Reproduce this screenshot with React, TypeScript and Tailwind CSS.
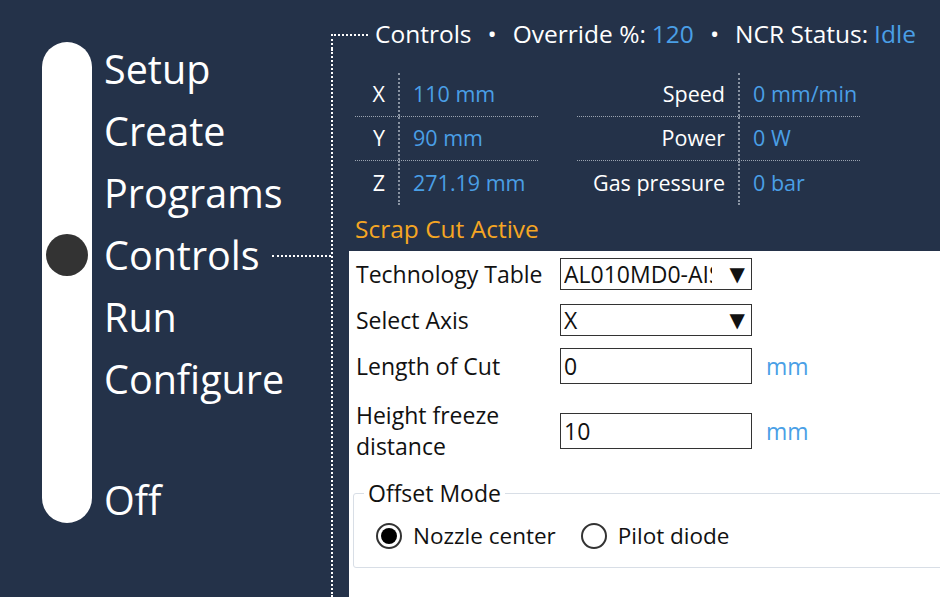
const navItems = ['Setup', 'Create', 'Programs', 'Controls', 'Run', 'Configure']

const axes = [
  { label: 'X', value: '110 mm' },
  { label: 'Y', value: '90 mm' },
  { label: 'Z', value: '271.19 mm' },
]

const stats = [
  { label: 'Speed', value: '0 mm/min' },
  { label: 'Power', value: '0 W' },
  { label: 'Gas pressure', value: '0 bar' },
]

function ReadoutTable({ rows, labelWidth, width }: { rows: { label: string; value: string }[]; labelWidth: string; width: string }) {
  return (
    <div className={`flex flex-col ${width}`}>
      {rows.map((row, i) => (
        <div
          key={row.label}
          className={`flex h-[44px] items-center ${i < rows.length - 1 ? 'border-b border-dotted border-[#9aa3b0]' : ''}`}
        >
          <div className={`${labelWidth} flex h-full items-center justify-end border-r-2 border-dotted border-[#8a94a3] pr-[13px] text-white`}>
            {row.label}
          </div>
          <div className="pl-[13px] text-[#4a9fe6]">{row.value}</div>
        </div>
      ))}
    </div>
  )
}

function SelectBox({ value }: { value: string }) {
  return (
    <div className="flex h-[32px] w-[192px] items-center border border-[#333] bg-white pl-[3px] pr-[6px]">
      <span className="w-[148px] overflow-hidden whitespace-nowrap">{value}</span>
      <span className="ml-auto text-[20px] leading-none" style={{ fontFamily: '"DejaVu Sans", sans-serif' }}>
        ▼
      </span>
    </div>
  )
}

function TextBox({ value }: { value: string }) {
  return (
    <div className="flex h-[36px] w-[192px] items-center border border-[#333] bg-white pl-[3px]">
      {value}
    </div>
  )
}

function Radio({ checked, label }: { checked?: boolean; label: string }) {
  return (
    <div className="flex items-center gap-[11px]">
      <span className="flex h-[26px] w-[26px] items-center justify-center rounded-full border-2 border-[#333] bg-white">
        {checked && <span className="h-[16px] w-[16px] rounded-full bg-black" />}
      </span>
      <span>{label}</span>
    </div>
  )
}

export default function App() {
  return (
    <div
      className="flex h-[597px] w-[940px] overflow-hidden bg-[#243249]"
      style={{ fontFamily: '"Open Sans", "Noto Sans", sans-serif' }}
    >
      {/* side nav */}
      <div className="flex w-[331px] shrink-0 pt-[42px]">
        <div className="relative ml-[42px] h-[481px] w-[50px] shrink-0 rounded-full bg-white">
          <span className="absolute left-[4px] top-[192px] h-[42px] w-[42px] rounded-full bg-[#333333]" />
        </div>
        <div className="-mt-[4px] ml-[12px] flex flex-1 flex-col text-[39.5px] leading-[62px] text-white">
          {navItems.map((item) => (
            <div key={item} className="flex h-[62px] items-center">
              <span>{item}</span>
              {item === 'Controls' && <span className="ml-[12px] mt-[2px] flex-1 border-t-2 border-dotted border-white" />}
            </div>
          ))}
          <div className="mt-[59px] flex h-[62px] items-center">Off</div>
        </div>
      </div>

      {/* controls area */}
      <div className="flex flex-1 flex-col pt-[19px]">
        <div className="flex h-[30px] items-stretch text-[24.5px] text-white">
          <div className="flex w-[44px] flex-col">
            <div className="h-[15px]" />
            <div className="w-[37px] flex-1 border-l-2 border-t-2 border-dotted border-white" />
          </div>
          <div className="flex items-center whitespace-nowrap leading-none">
            <span>Controls</span>
            <span className="mx-[16px]">•</span>
            <span>Override %:</span>
            <span className="ml-[6px] text-[#4a9fe6]">120</span>
            <span className="mx-[16px]">•</span>
            <span>NCR Status:</span>
            <span className="ml-[6px] text-[#4a9fe6]">Idle</span>
          </div>
        </div>

        <div className="flex flex-1 flex-col border-l-2 border-dotted border-white">
          <div className="ml-[22px] mt-[24px] flex gap-[39px] text-[21.5px]">
            <ReadoutTable rows={axes} labelWidth="w-[45px]" width="w-[183px]" />
            <ReadoutTable rows={stats} labelWidth="w-[163px]" width="w-[283px]" />
          </div>

          <div className="ml-[22px] mt-[9px] text-[24.5px] leading-[30px] text-[#f5a623]">Scrap Cut Active</div>

          <div className="ml-[16px] mt-[7px] flex flex-1 flex-col bg-white pl-[7px] pt-[7px] text-[23px] text-[#111]">
            <div className="flex h-[32px] items-center">
              <div className="w-[204px]">Technology Table</div>
              <SelectBox value="AL010MD0-AISI" />
            </div>
            <div className="mt-[14px] flex h-[32px] items-center">
              <div className="w-[204px]">Select Axis</div>
              <SelectBox value="X" />
            </div>
            <div className="mt-[12px] flex h-[36px] items-center">
              <div className="w-[204px]">Length of Cut</div>
              <TextBox value="0" />
              <div className="ml-[14px] text-[#4a9fe6]">mm</div>
            </div>
            <div className="mt-[16px] flex h-[62px] items-center">
              <div className="w-[204px] leading-[31px]">
                Height freeze
                <br />
                distance
              </div>
              <TextBox value="10" />
              <div className="ml-[14px] text-[#4a9fe6]">mm</div>
            </div>

            <fieldset className="-ml-[3px] mr-[-10px] mt-[20px] rounded-[3px] border border-[#d8dee6] pb-[14px] pl-[10px] pt-[14px]">
              <legend className="px-[4px] text-[23px] leading-none">Offset Mode</legend>
              <div className="ml-[12px] flex gap-[25px] text-[22.5px]">
                <Radio checked label="Nozzle center" />
                <Radio label="Pilot diode" />
              </div>
            </fieldset>
          </div>
        </div>
      </div>
    </div>
  )
}
